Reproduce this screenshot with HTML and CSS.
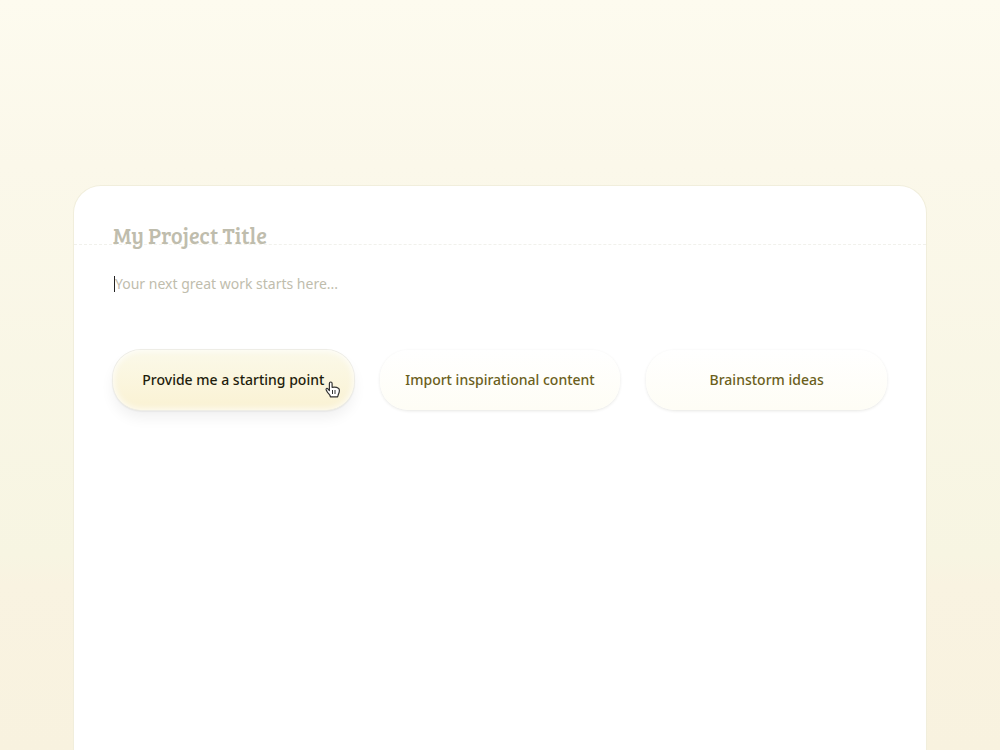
FILE: index.html
```
<!DOCTYPE html>
<html lang="en">
<head>
  <meta charset="utf-8">
  <title>My Project</title>
  <link rel="stylesheet" href="styles.css">
</head>
<body>
  <main class="sheet">
    <header class="sheet-header">
      <input class="title-input" type="text" aria-label="Project title" placeholder="My Project Title">
    </header>

    <div class="sheet-body">
      <input class="text-input" type="text" aria-label="Project text" placeholder="Your next great work starts here...">

      <div class="actions">
        <button class="action active" type="button">
          Provide me a starting point
          <svg class="pointer" width="16" height="18" viewBox="0 0 16 18" aria-hidden="true">
            <path d="M4.4 9.6V2.500c0-2 2.700-2 2.700 0v3.800c2.600-.3 5.200 .1 6.300 .9.800.5 1 1.200 1 2.200 0 2.200-1 3.600-1.300 4.800l-.5 1.600H5.400l-.4-1.300c-.6-1.300-2.200-2.500-3-4.100L1.200 9c-.6-1.500.800-2.100 1.700-1.100z" fill="#fff" stroke="#333" stroke-width="1.2" stroke-linejoin="round"/>
            <path d="M7.500 9v4M10 9v4" fill="none" stroke="#333" stroke-width="1"/>
          </svg>
        </button>
        <button class="action" type="button">Import inspirational content</button>
        <button class="action" type="button">Brainstorm ideas</button>
      </div>
    </div>
  </main>
</body>
</html>
```
FILE: styles.css
```
* {
  box-sizing: border-box;
}

body {
  display: flex;
  min-height: 100vh;
  margin: 0;
  padding: 185px 73px 0;
  background: linear-gradient(#fdfbef 0%, #fbf8ea 22%, #f7f5e2 74%, #f9f3e1 78%, #f8f2df 100%);
  font-family: "Noto Sans", sans-serif;
}

.sheet {
  flex: 1;
  background: #fff;
  border: 1px solid #f1eedc;
  border-bottom: none;
  border-radius: 28px 28px 0 0;
}

.sheet-header {
  padding: 33px 39px 0;
  border-bottom: 1px dashed #f1f1ec;
}

input {
  display: block;
  width: 100%;
  padding: 0;
  border: none;
  outline: none;
  background: none;
}

input::placeholder {
  color: #bfbdad;
  opacity: 1;
}

/* the title hangs a little over the ruled line */
.title-input {
  height: 32px;
  margin-bottom: -7px;
  font: 22px/32px "Bree Serif", "DejaVu Serif Condensed", "DejaVu Serif", serif;
}

.sheet-body {
  padding: 29px 39px 40px;
}

/* drawn caret at the start of the empty line */
.text-input {
  height: 20px;
  padding-left: 2px;
  background: linear-gradient(#222, #222) 1px center / 1px 16px no-repeat;
  font: 14px/20px "Noto Sans", sans-serif;
}

.actions {
  display: grid;
  grid-template-columns: repeat(3, 1fr);
  gap: 26px;
  margin-top: 56px;
}

.action {
  position: relative;
  height: 60px;
  padding: 0 20px 2px;
  border: none;
  border-radius: 28px;
  background: linear-gradient(#fff, #fefdf5);
  box-shadow: 0 1px 3px rgba(60, 60, 30, 0.12);
  color: #6b5f1c;
  font: 500 14px "Noto Sans", sans-serif;
  cursor: pointer;
}

.action.active {
  background: linear-gradient(#fbf9e9, #faf2d3);
  box-shadow: inset 0 0 6px 1px rgba(255, 255, 255, 0.8), 0 0 0 1px #eeede6, 0 1px 2px rgba(0, 0, 0, 0.15), 0 8px 14px rgba(0, 0, 0, 0.06);
  color: #1f1d0c;
}

.pointer {
  position: absolute;
  top: 31px;
  right: 13px;
}
```
